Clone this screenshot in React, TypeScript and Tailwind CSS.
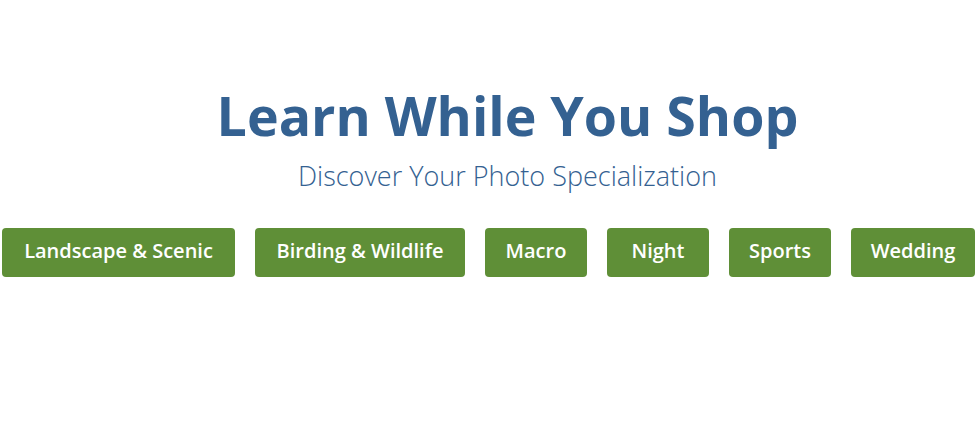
import React from "react";

const cats: [string, string][] = [
  ["Landscape & Scenic", "w-[233px]"],
  ["Birding & Wildlife", "w-[210px]"],
  ["Macro", "w-[102px]"],
  ["Night", "w-[102px]"],
  ["Sports", "w-[102px]"],
  ["Wedding", "w-[124px]"],
];

export default function App() {
  return (
    <div
      className="w-[977px] h-[430px] bg-white flex flex-col items-center pt-[78px] overflow-hidden"
      style={{ fontFamily: '"Open Sans", sans-serif' }}
    >
      <div className="flex flex-col items-center pl-[38px]">
        <h1 className="text-[53.7px] leading-[76px] font-bold text-[#346191] whitespace-nowrap">
          Learn While You Shop
        </h1>
        <p className="mt-[3px] text-[27px] leading-[38px] font-light text-[#346191] whitespace-nowrap">
          Discover Your Photo Specialization
        </p>
      </div>
      <div className="flex justify-center gap-[20px] mt-[33px] w-[977px]">
        {cats.map(([c, w]) => (
          <button
            key={c}
            className={`${w} h-[49px] pb-[3px] shrink-0 whitespace-nowrap flex items-center justify-center rounded-[4px] bg-[#5f8f37] text-white text-[20px] font-semibold`}
          >
            {c}
          </button>
        ))}
      </div>
    </div>
  );
}
